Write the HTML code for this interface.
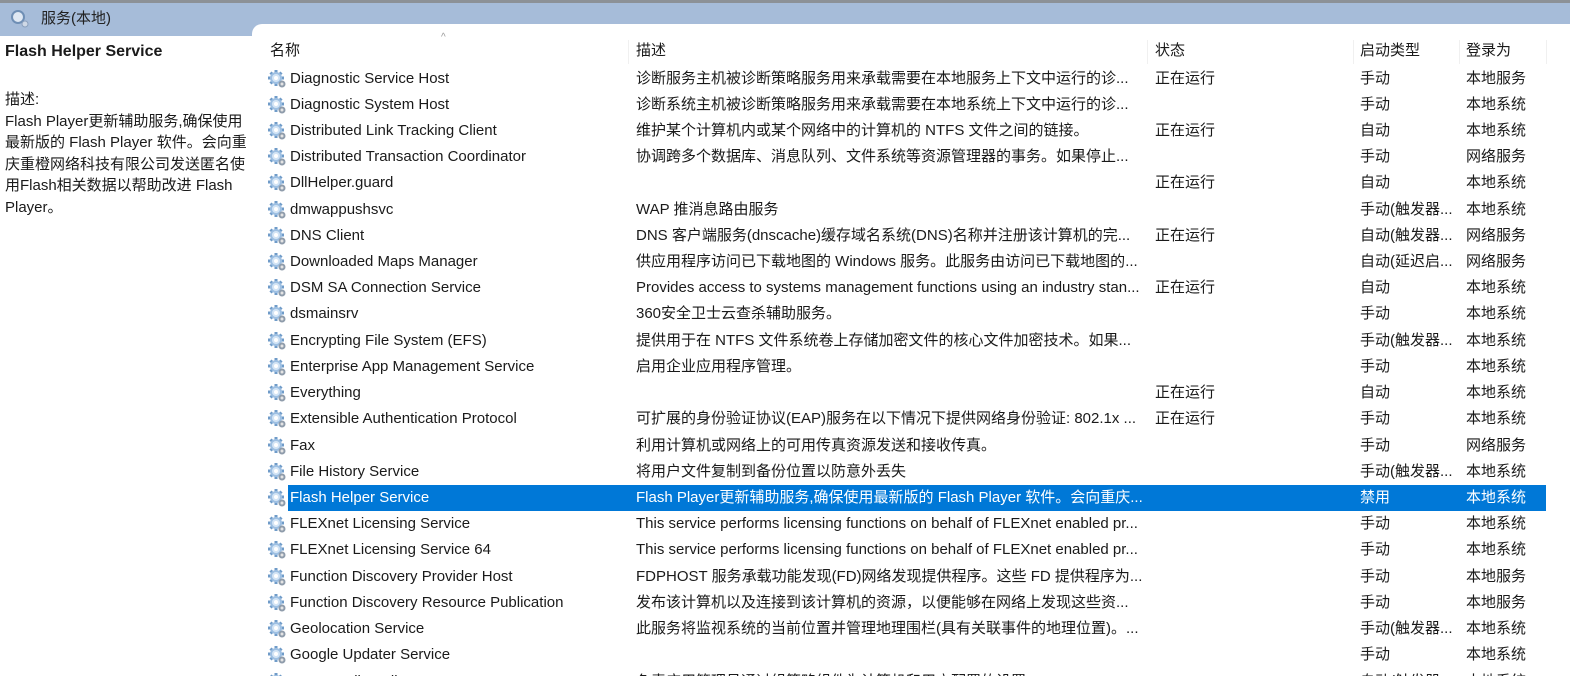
<!DOCTYPE html><html><head><meta charset="utf-8"><style>
html,body{margin:0;width:1570px;height:676px;overflow:hidden}
body{background:#fff;font-family:"Liberation Sans","Noto Sans CJK SC",sans-serif;font-size:15px;color:#1a1a1a;position:relative}
.top{position:absolute;left:0;top:0;width:1570px;height:3px;background:#8c9197}
.bar{position:absolute;left:0;top:3px;width:1570px;height:33px;background:#a6bcd9}
.panel{position:absolute;left:252px;top:24px;width:1318px;height:652px;background:#fff;border-top-left-radius:10px}
.t{position:absolute;white-space:nowrap;line-height:20px}
#rows{position:absolute;left:0;top:0;width:1570px;height:676px;overflow:hidden}
.r{position:absolute;left:0;width:1570px;height:26px}
.r span{position:absolute;top:3px;white-space:nowrap;line-height:20px;overflow:hidden}
.sel{background:#0078d7;left:288px!important;width:1258px!important}
.sel span{color:#fff}
.ic{position:absolute;left:267px;width:19px;height:19px}
.sep{position:absolute;top:40px;width:1px;height:24px;background:#f0f0f0}
</style></head><body>
<div class="top"></div><div class="bar"></div>
<svg style="position:absolute;left:10px;top:9px" width="22" height="20" viewBox="0 0 22 20"><circle cx="8" cy="8" r="6" fill="#dfe8f3" stroke="#6f8fb5" stroke-width="2"/><circle cx="15" cy="15" r="3" fill="#cfd9e6" stroke="#8aa0bd"/></svg>
<div class="t" style="left:41px;top:9px;color:#222">服务(本地)</div>
<div class="panel"></div>
<div class="t" style="left:5px;top:42px;font-weight:bold;font-size:16px">Flash Helper Service</div>
<div class="t" style="left:5px;top:89px;line-height:21.5px;width:250px;white-space:normal">描述:<br>Flash Player更新辅助服务,确保使用最新版的 Flash Player 软件。会向重庆重橙网络科技有限公司发送匿名使用Flash相关数据以帮助改进 Flash Player。</div>
<div class="t" style="left:441px;top:28px;font-size:10px;color:#999">^</div>
<div class="t" style="left:270px;top:41px">名称</div>
<div class="t" style="left:636px;top:41px">描述</div>
<div class="t" style="left:1155px;top:41px">状态</div>
<div class="t" style="left:1360px;top:41px">启动类型</div>
<div class="t" style="left:1466px;top:41px">登录为</div>
<div class="sep" style="left:628px"></div><div class="sep" style="left:1147px"></div><div class="sep" style="left:1353px"></div><div class="sep" style="left:1459px"></div><div class="sep" style="left:1546px"></div>
<svg width="0" height="0" style="position:absolute"><defs><g id="g"><g stroke="#6f9bc8" stroke-width="3"><line x1="9" y1="1" x2="9" y2="17"/><line x1="1" y1="9" x2="17" y2="9"/><line x1="3.5" y1="3.5" x2="14.5" y2="14.5"/><line x1="14.5" y1="3.5" x2="3.5" y2="14.5"/></g><circle cx="9" cy="9" r="6" fill="#9dbfe2"/><circle cx="9" cy="9" r="4" fill="#d3e4f5"/><circle cx="9" cy="9" r="2" fill="#fff"/><circle cx="15" cy="15" r="3.5" fill="#8f9cab"/><circle cx="15" cy="15" r="1.5" fill="#e4e4e4"/></g></defs></svg>
<div id="rows"></div>
<script>
var d=[["Diagnostic Service Host","诊断服务主机被诊断策略服务用来承载需要在本地服务上下文中运行的诊...","正在运行","手动","本地服务"],
["Diagnostic System Host","诊断系统主机被诊断策略服务用来承载需要在本地系统上下文中运行的诊...","","手动","本地系统"],
["Distributed Link Tracking Client","维护某个计算机内或某个网络中的计算机的 NTFS 文件之间的链接。","正在运行","自动","本地系统"],
["Distributed Transaction Coordinator","协调跨多个数据库、消息队列、文件系统等资源管理器的事务。如果停止...","","手动","网络服务"],
["DllHelper.guard","","正在运行","自动","本地系统"],
["dmwappushsvc","WAP 推消息路由服务","","手动(触发器...","本地系统"],
["DNS Client","DNS 客户端服务(dnscache)缓存域名系统(DNS)名称并注册该计算机的完...","正在运行","自动(触发器...","网络服务"],
["Downloaded Maps Manager","供应用程序访问已下载地图的 Windows 服务。此服务由访问已下载地图的...","","自动(延迟启...","网络服务"],
["DSM SA Connection Service","Provides access to systems management functions using an industry stan...","正在运行","自动","本地系统"],
["dsmainsrv","360安全卫士云查杀辅助服务。","","手动","本地系统"],
["Encrypting File System (EFS)","提供用于在 NTFS 文件系统卷上存储加密文件的核心文件加密技术。如果...","","手动(触发器...","本地系统"],
["Enterprise App Management Service","启用企业应用程序管理。","","手动","本地系统"],
["Everything","","正在运行","自动","本地系统"],
["Extensible Authentication Protocol","可扩展的身份验证协议(EAP)服务在以下情况下提供网络身份验证: 802.1x ...","正在运行","手动","本地系统"],
["Fax","利用计算机或网络上的可用传真资源发送和接收传真。","","手动","网络服务"],
["File History Service","将用户文件复制到备份位置以防意外丢失","","手动(触发器...","本地系统"],
["Flash Helper Service","Flash Player更新辅助服务,确保使用最新版的 Flash Player 软件。会向重庆...","","禁用","本地系统"],
["FLEXnet Licensing Service","This service performs licensing functions on behalf of FLEXnet enabled pr...","","手动","本地系统"],
["FLEXnet Licensing Service 64","This service performs licensing functions on behalf of FLEXnet enabled pr...","","手动","本地系统"],
["Function Discovery Provider Host","FDPHOST 服务承载功能发现(FD)网络发现提供程序。这些 FD 提供程序为...","","手动","本地服务"],
["Function Discovery Resource Publication","发布该计算机以及连接到该计算机的资源，以便能够在网络上发现这些资...","","手动","本地服务"],
["Geolocation Service","此服务将监视系统的当前位置并管理地理围栏(具有关联事件的地理位置)。...","","手动(触发器...","本地系统"],
["Google Updater Service","","","手动","本地系统"],
["Group Policy Client","负责应用管理员通过组策略组件为计算机和用户配置的设置。","","自动(触发器...","本地系统"]];
var h="";
d.forEach(function(r,i){var y=65.5+i*26.22;var s=i==16;
h+='<svg class="ic" style="top:'+(y+3)+'px" viewBox="0 0 19 19"><use href="#g"/></svg>';
h+='<div class="r'+(s?' sel':'')+'" style="top:'+y+'px">';
var o=s?288:0;
h+='<span style="left:'+(290-o)+'px;width:335px">'+r[0]+'</span><span style="left:'+(636-o)+'px;width:515px">'+r[1]+'</span><span style="left:'+(1155-o)+'px">'+r[2]+'</span><span style="left:'+(1360-o)+'px;width:100px">'+r[3]+'</span><span style="left:'+(1466-o)+'px">'+r[4]+'</span></div>';});
document.getElementById("rows").innerHTML=h;
</script>
</body></html>
